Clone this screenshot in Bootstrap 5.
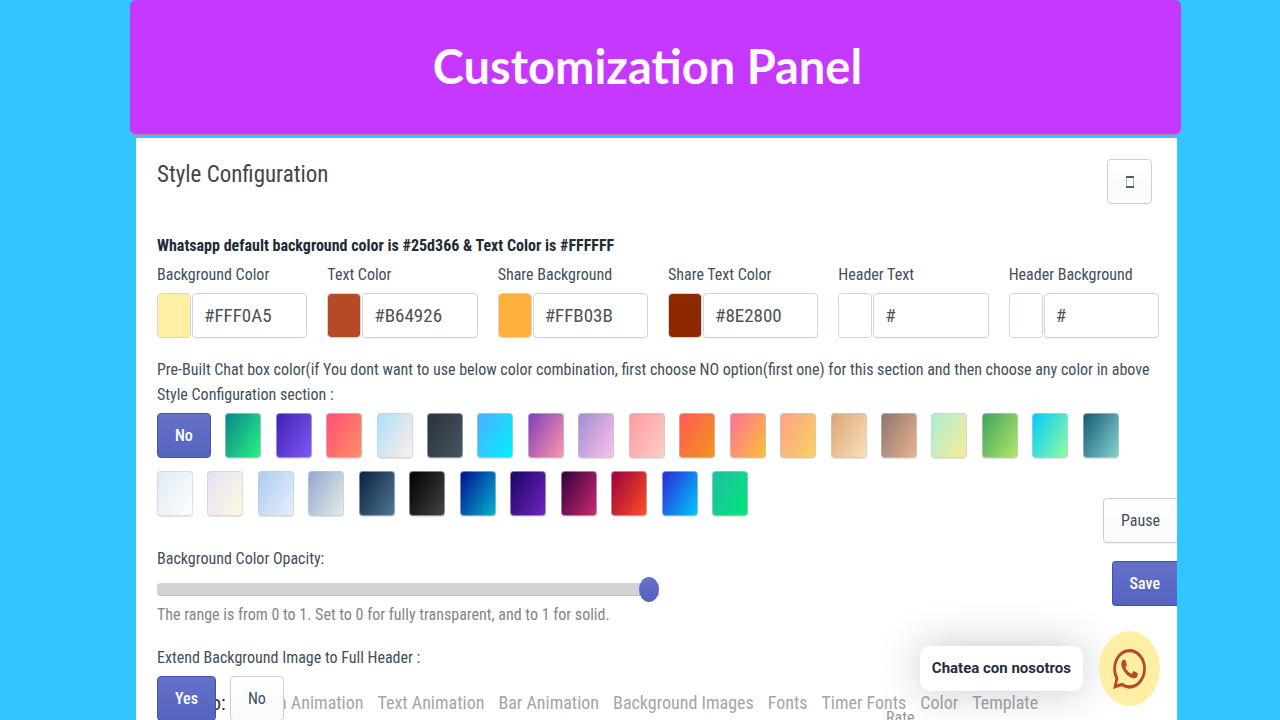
<!DOCTYPE html>
<html lang="en">
<head>
<meta charset="utf-8">
<meta name="viewport" content="width=device-width, initial-scale=1">
<title>Customization Panel</title>
<link href="https://cdn.jsdelivr.net/npm/bootstrap@5.3.0/dist/css/bootstrap.min.css" rel="stylesheet">
<style>
  body { background: #31c6ff; font-family: "Roboto Condensed", Roboto, sans-serif; font-size: 16px; line-height: 25px; color: #414f5b; }
  .page { padding: 0 99px 0 130px; }
  .banner { height: 135px; background: #c637ff; border-bottom: 1px solid #c77bb4; border-radius: 6px; margin-bottom: 3px; padding: 0 16px 2px 0; }
  .banner h1 { font: 700 47px/56px Lato, sans-serif; color: #fffafa; }
  .panel { margin: 0 4px 0 6px; background: #fff; padding: 21px 18px 0 21px; }
  .panel-title { font-size: 23px; font-weight: 400; line-height: 32px; color: #454545; }
  .note { margin: 29px 0 4px; font-weight: 700; color: #212b36; }
  .btn { --bs-btn-font-size: 16px; --bs-btn-line-height: 25px; --bs-btn-padding-x: 17px; --bs-btn-padding-y: 9px; --bs-btn-border-radius: 4px; }
  .btn-plain { border-color: #c9d1d9; background: linear-gradient(#fff, #f9fafb); color: #414f5b; box-shadow: 0 1px 1px #161d250d; }
  .btn-indigo { border-color: #4350af; background: linear-gradient(#6571c7, #5563c1); color: #fff; font-weight: 500; }
  .btn-device { width: 45px; height: 45px; margin-right: 7px; }
  .fields { --bs-gutter-x: 20px; }
  .fields label { margin-bottom: 6px; }
  .pick { appearance: none; flex: 0 0 34px; width: 34px; height: 45px; margin-right: 1px; padding: 0; border: 1px solid #cdd5dd; border-radius: 4px; background: none; }
  .pick::-webkit-color-swatch-wrapper { padding: 0; }
  .pick::-webkit-color-swatch { border: 0; border-radius: 3px; }
  .hex { height: 45px; padding: 0 11px; border-color: #cdd5dd; border-radius: 4px; font-size: 19px; color: #4a5157; box-shadow: 0 1px 1px #161d250d; }
  .intro { margin: 19px 0 6px; }
  .swatches-a { width: 96%; }
  .swatches-b { width: 59%; margin-top: 13px; }
  .swatch { width: 36px; height: 45px; padding: 0; border: 1px solid #c4cdd599; border-radius: 4px; background: linear-gradient(120deg, var(--a), var(--b)) border-box; box-shadow: 0 1px 1px #161d2522; }
  .opacity-label { margin: 30px 0 6px; }
  .opacity { appearance: none; display: block; width: 502px; max-width: 100%; height: 25px; margin: 0; background: none; }
  .opacity::-webkit-slider-runnable-track { height: 13px; background: #d3d3d3; border-bottom: 1px solid #bcbcbc; border-radius: 4px 0 0 4px; }
  .opacity::-webkit-slider-thumb { appearance: none; width: 20px; height: 25px; margin-top: -6px; border-radius: 50%; background: linear-gradient(#6571c7, #5563c1); }
  .hint { margin: 0 0 18px; color: #858585; }
  .choice { gap: 14px; margin-top: 6px; z-index: 2; }
  .jump-bar { bottom: 4px; left: 211px; z-index: 1; gap: 14px; font-size: 18px; line-height: 26px; color: #a5a5a5; }
  .jump-bar a { color: inherit; text-decoration: none; }
  .jump-bar .lead-in { width: 53px; font-size: 20px; color: #333; }
  .rate { bottom: -10px; left: 886px; z-index: 1; color: #999; }
  .side-tools { right: 103px; bottom: 114px; gap: 18px; z-index: 3; }
  .side-tools .btn { border-right: 0; border-radius: 4px 0 0 4px; }
  .chat { right: 120px; bottom: 14px; gap: 16px; z-index: 3; }
  .chat-tip { padding: 10px 12px; border-radius: 10px; background: #fff; font: 700 15px/25px Roboto, sans-serif; color: #252c3c; box-shadow: 0 0 40px #1c274b40; }
  .chat-btn { width: 61px; height: 75px; border: 0; border-radius: 50%; background: #ffefa5; }
</style>
</head>
<body>
<div class="page vh-100 overflow-hidden position-relative">
  <header class="banner d-flex align-items-center justify-content-center"><h1 class="m-0">Customization Panel</h1></header>
  <main class="panel vh-100">
    <div class="d-flex justify-content-between align-items-start">
      <h2 class="panel-title m-0">Style Configuration</h2>
      <button type="button" class="btn btn-plain btn-device p-0 d-flex align-items-center justify-content-center" aria-label="Device preview">
        <svg width="8" height="12" viewBox="0 0 8 12" fill="none"><path d="M.5 1v10M7.5 1v10" stroke="#b5babf"/><path d="M0 1h8M0 11h8" stroke="#555d65" stroke-width="2"/></svg>
      </button>
    </div>
    <p class="note">Whatsapp default background color is #25d366 &amp; Text Color is #FFFFFF</p>
    <div class="row fields">
      <div class="col-2"><label for="c1" class="d-block">Background Color</label><div class="d-flex"><input type="color" class="pick" value="#fff0a5" aria-label="Pick background color"><input id="c1" class="form-control hex" value="#FFF0A5"></div></div>
      <div class="col-2"><label for="c2" class="d-block">Text Color</label><div class="d-flex"><input type="color" class="pick" value="#b64926" aria-label="Pick text color"><input id="c2" class="form-control hex" value="#B64926"></div></div>
      <div class="col-2"><label for="c3" class="d-block">Share Background</label><div class="d-flex"><input type="color" class="pick" value="#ffb03b" aria-label="Pick share background"><input id="c3" class="form-control hex" value="#FFB03B"></div></div>
      <div class="col-2"><label for="c4" class="d-block">Share Text Color</label><div class="d-flex"><input type="color" class="pick" value="#8e2800" aria-label="Pick share text color"><input id="c4" class="form-control hex" value="#8E2800"></div></div>
      <div class="col-2"><label for="c5" class="d-block">Header Text</label><div class="d-flex"><input type="color" class="pick" value="#ffffff" aria-label="Pick header text"><input id="c5" class="form-control hex" value="#"></div></div>
      <div class="col-2"><label for="c6" class="d-block">Header Background</label><div class="d-flex"><input type="color" class="pick" value="#ffffff" aria-label="Pick header background"><input id="c6" class="form-control hex" value="#"></div></div>
    </div>
    <p class="intro">Pre-Built Chat box color(if You dont want to use below color combination, first choose NO option(first one) for this section and then choose any color in above Style Configuration section :</p>
    <div class="swatches-a d-flex justify-content-between">
      <button type="button" class="btn btn-indigo">No</button>
      <button type="button" class="swatch" aria-label="Green" style="--a:#08838c;--b:#2cf482"></button>
      <button type="button" class="swatch" aria-label="Violet" style="--a:#4020b8;--b:#7f5af0"></button>
      <button type="button" class="swatch" aria-label="Coral" style="--a:#ff4e74;--b:#ff9068"></button>
      <button type="button" class="swatch" aria-label="Powder" style="--a:#abe0fa;--b:#ffeee8"></button>
      <button type="button" class="swatch" aria-label="Slate" style="--a:#29323c;--b:#485563"></button>
      <button type="button" class="swatch" aria-label="Sky" style="--a:#4facfe;--b:#00f2fe"></button>
      <button type="button" class="swatch" aria-label="Orchid" style="--a:#7f3cba;--b:#ff99ac"></button>
      <button type="button" class="swatch" aria-label="Lilac" style="--a:#a18cd1;--b:#fbc2eb"></button>
      <button type="button" class="swatch" aria-label="Rose" style="--a:#ff9a9e;--b:#fad0c4"></button>
      <button type="button" class="swatch" aria-label="Orange" style="--a:#ff5858;--b:#f09819"></button>
      <button type="button" class="swatch" aria-label="Sunset" style="--a:#fa709a;--b:#ffc035"></button>
      <button type="button" class="swatch" aria-label="Peach" style="--a:#ffa085;--b:#f6d365"></button>
      <button type="button" class="swatch" aria-label="Sand" style="--a:#d9a577;--b:#ffe0b8"></button>
      <button type="button" class="swatch" aria-label="Mocha" style="--a:#8d746f;--b:#eab590"></button>
      <button type="button" class="swatch" aria-label="Mint lemon" style="--a:#abecd6;--b:#fbed96"></button>
      <button type="button" class="swatch" aria-label="Lime" style="--a:#3ba55d;--b:#b8e66b"></button>
      <button type="button" class="swatch" aria-label="Aqua" style="--a:#00c9ff;--b:#92fe9d"></button>
      <button type="button" class="swatch" aria-label="Teal" style="--a:#155679;--b:#85d8ce"></button>
    </div>
    <div class="swatches-b d-flex justify-content-between">
      <button type="button" class="swatch" aria-label="Mist" style="--a:#dfe9f3;--b:#ffffff"></button>
      <button type="button" class="swatch" aria-label="Lavender cream" style="--a:#e9defa;--b:#fbfcdb"></button>
      <button type="button" class="swatch" aria-label="Ice" style="--a:#accbee;--b:#e7f0fd"></button>
      <button type="button" class="swatch" aria-label="Haze" style="--a:#93a5cf;--b:#e4efe9"></button>
      <button type="button" class="swatch" aria-label="Navy" style="--a:#09203f;--b:#537895"></button>
      <button type="button" class="swatch" aria-label="Black" style="--a:#000000;--b:#434343"></button>
      <button type="button" class="swatch" aria-label="Ocean" style="--a:#050c8f;--b:#00b7d0"></button>
      <button type="button" class="swatch" aria-label="Indigo" style="--a:#1a0560;--b:#7124c4"></button>
      <button type="button" class="swatch" aria-label="Wine" style="--a:#30003c;--b:#cc2b72"></button>
      <button type="button" class="swatch" aria-label="Red" style="--a:#99003b;--b:#ff5024"></button>
      <button type="button" class="swatch" aria-label="Blue" style="--a:#2b25d8;--b:#00ccff"></button>
      <button type="button" class="swatch" aria-label="Emerald" style="--a:#20bfa4;--b:#00e676"></button>
    </div>
    <label for="opacity" class="opacity-label d-block">Background Color Opacity:</label>
    <input type="range" class="opacity" id="opacity" min="0" max="1" step="0.1" value="1">
    <p class="hint">The range is from 0 to 1. Set to 0 for fully transparent, and to 1 for solid.</p>
    <p class="m-0">Extend Background Image to Full Header :</p>
    <div class="choice d-flex position-relative">
      <button type="button" class="btn btn-indigo">Yes</button>
      <button type="button" class="btn btn-plain">No</button>
    </div>
  </main>
  <nav class="jump-bar d-flex position-absolute text-nowrap" aria-label="Sections">
    <span class="lead-in">o:</span>
    <a href="#">n Animation</a><a href="#">Text Animation</a><a href="#">Bar Animation</a><a href="#">Background Images</a><a href="#">Fonts</a><a href="#">Timer Fonts</a><a href="#">Color</a><a href="#">Template</a>
  </nav>
  <span class="rate position-absolute">Rate</span>
  <div class="side-tools d-flex flex-column align-items-end position-absolute">
    <button type="button" class="btn btn-plain">Pause</button>
    <button type="button" class="btn btn-indigo">Save</button>
  </div>
  <div class="chat d-flex align-items-center position-absolute">
    <div class="chat-tip">Chatea con nosotros</div>
    <button type="button" class="chat-btn p-0" aria-label="WhatsApp">
      <svg width="33" height="40" viewBox="0 0 24 24" preserveAspectRatio="none" fill="#b64926"><path d="M17.472 14.382c-.297-.149-1.758-.867-2.03-.967-.273-.099-.471-.148-.67.15-.197.297-.767.966-.94 1.164-.173.199-.347.223-.644.075-.297-.15-1.255-.463-2.39-1.475-.883-.788-1.48-1.761-1.653-2.059-.173-.297-.018-.458.13-.606.134-.133.298-.347.446-.52.149-.174.198-.298.298-.497.099-.198.05-.371-.025-.52-.075-.149-.669-1.612-.916-2.207-.242-.579-.487-.5-.669-.51-.173-.008-.371-.01-.57-.01-.198 0-.52.074-.792.372-.272.297-1.04 1.016-1.04 2.479 0 1.462 1.065 2.875 1.213 3.074.149.198 2.096 3.2 5.077 4.487.709.306 1.262.489 1.694.625.712.227 1.36.195 1.871.118.571-.085 1.758-.719 2.006-1.413.248-.694.248-1.289.173-1.413-.074-.124-.272-.198-.57-.347m-5.421 7.403h-.004a9.87 9.87 0 01-5.031-1.378l-.361-.214-3.741.982.998-3.648-.235-.374a9.86 9.86 0 01-1.51-5.26c.001-5.45 4.436-9.884 9.888-9.884 2.64 0 5.122 1.03 6.988 2.898a9.825 9.825 0 012.893 6.994c-.003 5.45-4.437 9.884-9.885 9.884m8.413-18.297A11.815 11.815 0 0012.05 0C5.495 0 .16 5.335.157 11.892c0 2.096.547 4.142 1.588 5.945L.057 24l6.305-1.654a11.882 11.882 0 005.683 1.448h.005c6.554 0 11.89-5.335 11.893-11.893a11.821 11.821 0 00-3.48-8.413z"/></svg>
    </button>
  </div>
</div>
<script src="https://cdn.jsdelivr.net/npm/bootstrap@5.3.0/dist/js/bootstrap.bundle.min.js"></script>
</body>
</html>
